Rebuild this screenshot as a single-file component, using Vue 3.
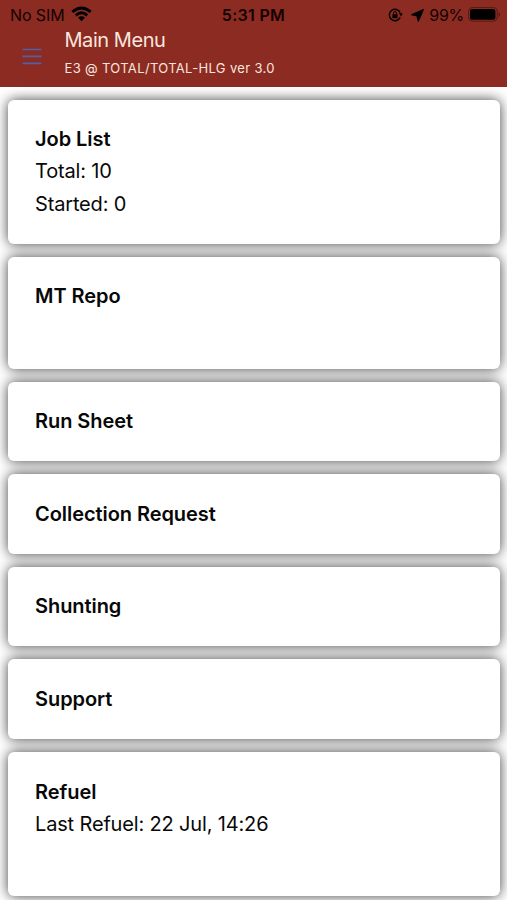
<script setup>
const cards = [
  { title: 'Job List', lines: ['Total: 10', 'Started: 0'], size: 'large' },
  { title: 'MT Repo', lines: [], size: 'medium' },
  { title: 'Run Sheet', lines: [], size: 'small' },
  { title: 'Collection Request', lines: [], size: 'small' },
  { title: 'Shunting', lines: [], size: 'small' },
  { title: 'Support', lines: [], size: 'small' },
  { title: 'Refuel', lines: ['Last Refuel: 22 Jul, 14:26'], size: 'large' },
]
</script>

<template>
  <div class="screen">
    <header class="header">
      <div class="status">
        <div class="carrier">
          <span class="sim">No SIM</span>
          <svg class="wifi" width="21" height="16" viewBox="0 0 21 16">
            <path d="M10.5 15.2 7 11.6Q10.5 8.7 14 11.6Z" />
            <path class="arc" d="M4.8 9.3Q10.5 4.4 16.2 9.3M1.3 5.9Q10.5-2 19.7 5.9" />
          </svg>
        </div>
        <span class="time">5:31 PM</span>
        <div class="indicators">
          <svg class="lock" width="15" height="14" viewBox="0 0 15 14">
            <path class="ring" d="M12.2 4.6A5.7 5.7 0 1 0 12.2 9.4" />
            <path d="M10.8 5.2h3.8l-1.5 3.4z" />
            <rect x="4.4" y="6.2" width="5.2" height="4" rx=".6" />
            <path class="shackle" d="M5.5 6.4V5a1.5 1.5 0 0 1 3 0v1.4" />
          </svg>
          <svg class="arrow" width="13" height="13" viewBox="0 0 13 13">
            <path d="M12.4.6 7.3 12.3 6 7 .6 5.8z" stroke="currentColor" stroke-width="1.1" stroke-linejoin="round" />
          </svg>
          <span class="percent">99%</span>
          <svg class="battery" width="33" height="15" viewBox="0 0 33 15">
            <rect x=".6" y=".6" width="28.6" height="13.6" rx="4" fill="none" stroke="currentColor" opacity=".4" />
            <rect x="2" y="2" width="25.4" height="10.8" rx="2.2" />
            <path d="M30.6 5v5q1.4-.8 1.4-2.5T30.6 5z" opacity=".45" />
          </svg>
        </div>
      </div>
      <div class="toolbar">
        <svg class="menu" width="20" height="17" viewBox="0 0 20 17">
          <path d="M.5 1.5h19M.5 8.4h19M.5 15.3h19" />
        </svg>
        <div class="titles">
          <h1>Main Menu</h1>
          <p>E3 @ TOTAL/TOTAL-HLG ver 3.0</p>
        </div>
      </div>
    </header>
    <main class="list">
      <section v-for="card in cards" :key="card.title" class="card" :class="card.size">
        <h2>{{ card.title }}</h2>
        <p v-for="line in card.lines" :key="line">{{ line }}</p>
      </section>
    </main>
  </div>
</template>

<style>
body {
  background: #fff;
}
</style>

<style scoped>
.screen {
  width: 507px;
  height: 900px;
  overflow: hidden;
  background: #fff;
  color: #080808;
  font-family: Inter, "Liberation Sans", sans-serif;
}
h1, h2, p {
  margin: 0;
  font-weight: 400;
}
svg {
  fill: currentColor;
  flex: none;
}
.header {
  height: 87px;
  background: #8c2b21;
}
.status {
  display: grid;
  grid-template-columns: 1fr auto 1fr;
  align-items: center;
  height: 30px;
  padding: 0 6px 0 10px;
  color: #120201;
  font-size: 16px;
  line-height: 30px;
}
.status svg {
  color: #000;
}
.carrier, .indicators {
  display: flex;
  align-items: center;
}
.carrier {
  gap: 6px;
  letter-spacing: -0.1px;
}
.wifi {
  margin-bottom: 2px;
}
.wifi .arc {
  fill: none;
  stroke: currentColor;
  stroke-width: 2.9;
}
.time {
  margin-left: -4px;
  font-weight: 600;
  letter-spacing: 0.3px;
}
.indicators {
  justify-content: flex-end;
}
.lock .ring, .lock .shackle {
  fill: none;
  stroke: currentColor;
  stroke-width: 1.4;
}
.lock .shackle {
  stroke-width: 0.9;
}
.arrow {
  margin: 0 5px 0 8px;
}
.percent {
  letter-spacing: -0.3px;
}
.battery {
  margin: 0 0 1px 4px;
}
.toolbar {
  display: flex;
  padding-left: 22px;
}
.menu {
  margin-top: 18px;
  fill: none;
  stroke: #5260a5;
  stroke-width: 1.7;
}
.titles {
  margin-left: 22.5px;
  color: #f9e6df;
}
h1 {
  font-size: 20px;
  line-height: 21px;
  letter-spacing: -0.45px;
}
.titles p {
  margin-top: 9px;
  font-size: 13px;
  line-height: 16px;
  letter-spacing: 0.35px;
}
.list {
  display: flex;
  flex-direction: column;
  gap: 13px;
  padding: 12.5px 7px 0 8px;
}
.card {
  box-sizing: border-box;
  flex: none;
  padding: 23.5px 27px 0;
  border-radius: 6px;
  background: #fff;
  box-shadow: 0 0 13px rgba(0, 0, 0, 0.75);
}
.large {
  height: 144.4px;
}
.medium {
  height: 111.8px;
}
.small {
  height: 79.6px;
}
.card h2, .card p {
  font-size: 20px;
  line-height: 32.4px;
}
.card h2 {
  font-weight: 600;
  letter-spacing: -0.06px;
}
.card p {
  letter-spacing: -0.16px;
}
</style>
